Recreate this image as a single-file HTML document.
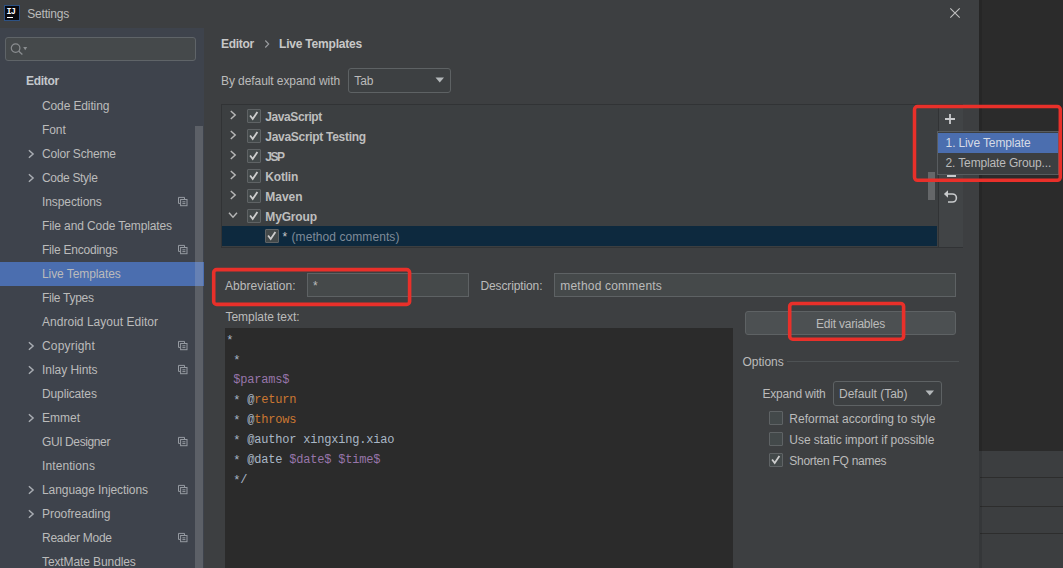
<!DOCTYPE html><html><head><meta charset="utf-8"><title>Settings</title><style>
html,body{margin:0;padding:0}body{width:1063px;height:568px;overflow:hidden;background:#2b2b2b;position:relative;font-family:'Liberation Sans', sans-serif;font-size:12px}
.t{position:absolute;white-space:pre;line-height:16px;height:16px}
.m{position:absolute;white-space:pre;font-family:'Liberation Mono', monospace;font-size:12px;line-height:20px;color:#a9b7c6;letter-spacing:-0.2px}
div,svg{box-sizing:content-box}
</style></head><body>
<div style="position:absolute;left:979px;top:451px;width:84px;height:117px;background:#3c3e40"></div>
<div style="position:absolute;left:980px;top:477px;width:83px;height:1px;background:#2d2d2d"></div>
<div style="position:absolute;left:980px;top:506px;width:83px;height:1px;background:#2d2d2d"></div>
<div style="position:absolute;left:980px;top:533px;width:83px;height:1px;background:#2d2d2d"></div>
<div style="position:absolute;left:0;top:0;width:979px;height:568px;background:#3d3f41"></div>
<div style="position:absolute;left:979px;top:0;width:3px;height:568px;background:rgba(0,0,0,0.1)"></div>
<div style="position:absolute;left:0;top:28px;width:204px;height:540px;background:#3e434c"></div>
<div style="position:absolute;left:4px;top:5px;width:14px;height:14px;background:#08090f;border:1px solid #2d5284"></div>
<div class="t" style="left:6.6px;top:8px;font:bold 8.5px 'Liberation Mono', monospace;line-height:9px;height:9px;color:#fff;letter-spacing:-1px">IJ</div>
<div style="position:absolute;left:7px;top:16.5px;width:6px;height:1.3px;background:#fff"></div>
<svg style="position:absolute;left:949px;top:7px" width="12" height="12" viewBox="0 0 12 12"><path d="M1.3 1.3 L10.7 10.7 M10.7 1.3 L1.3 10.7" stroke="#c0c0c0" stroke-width="1.1"/></svg>
<div style="position:absolute;left:5px;top:37px;width:189px;height:22px;border:1px solid #5f6468;background:#45494b;border-radius:3px"></div>
<svg style="position:absolute;left:9px;top:41px" width="20" height="16" viewBox="0 0 20 16"><circle cx="6.6" cy="7.1" r="4.3" fill="none" stroke="#8a8d90" stroke-width="1.2"/><path d="M9.8 10.3 L13.4 13.4" stroke="#8a8d90" stroke-width="1.3"/><path d="M14.2 6 H18.2 L16.2 9.2 Z" fill="#8a8d90"/></svg>
<div style="position:absolute;left:348px;top:68px;width:101px;height:23px;border:1px solid #5e6264;background:#3d4042;border-radius:3px"></div>
<svg style="position:absolute;left:434px;top:76px" width="12" height="8" viewBox="0 0 12 8"><path d="M1.5 1.5 H10 L5.75 6.5 Z" fill="#b4b8ba"/></svg>
<div style="position:absolute;left:221px;top:104px;width:740px;height:142px;border:1px solid #313335;background:#3c3f41"></div>
<div style="position:absolute;left:222px;top:226px;width:715px;height:20px;background:#0d293e"></div>
<div style="position:absolute;left:938px;top:105px;width:24px;height:142px;background:#414446;border-left:1px solid #313335"></div>
<div style="position:absolute;left:928px;top:172px;width:7px;height:28px;background:rgba(150,153,156,0.45)"></div>
<svg style="position:absolute;left:944px;top:113px" width="12" height="12" viewBox="0 0 12 12"><path d="M6 1 V11 M1 6 H11" stroke="#c9cbcd" stroke-width="1.8"/></svg>
<div style="position:absolute;left:947px;top:175px;width:9px;height:2px;background:#c9cbcd"></div>
<svg style="position:absolute;left:942px;top:189px" width="17" height="16" viewBox="0 0 17 16"><path d="M5 5 H10.4 A4 4 0 0 1 10.4 13 H6" fill="none" stroke="#c9cbcd" stroke-width="1.6"/><path d="M1.9 5 L6 1.3 V8.7 Z" fill="#c9cbcd"/></svg>
<div style="position:absolute;left:265px;top:229px;width:12px;height:12px;border:1px solid #5f6365;background:#43494a;border-radius:1px"></div><svg style="position:absolute;left:265px;top:229px" width="14" height="14" viewBox="0 0 14 14"><path d="M3.1 6.5 L5.7 10 L10.4 3" fill="none" stroke="#cdcdcd" stroke-width="1.8"/></svg>
<div style="position:absolute;left:937px;top:131px;width:120px;height:42px;border:1px solid #585c5f;background:#3c3f41"></div>
<div style="position:absolute;left:938px;top:133px;width:120px;height:20px;background:#4b6eaf"></div>
<div style="position:absolute;left:307px;top:273px;width:160px;height:22px;border:1px solid #5e6264;background:#45494a"></div>
<div style="position:absolute;left:554px;top:273px;width:400px;height:22px;border:1px solid #5e6264;background:#45494a"></div>
<div style="position:absolute;left:225px;top:328px;width:508px;height:240px;background:#2b2b2b"></div>
<div class="m" style="left:226.2px;top:330px"><span style='position:relative;top:1px'>*</span></div>
<div class="m" style="left:226.2px;top:350px"> <span style='position:relative;top:1px'>*</span></div>
<div class="m" style="left:226.2px;top:370px"> <span style='color:#9876aa'>$params$</span></div>
<div class="m" style="left:226.2px;top:390px"> <span style='position:relative;top:1px'>*</span> @<span style='color:#cc7832'>return</span></div>
<div class="m" style="left:226.2px;top:410px"> <span style='position:relative;top:1px'>*</span> @<span style='color:#cc7832'>throws</span></div>
<div class="m" style="left:226.2px;top:430px"> <span style='position:relative;top:1px'>*</span> @author xingxing.xiao</div>
<div class="m" style="left:226.2px;top:450px"> <span style='position:relative;top:1px'>*</span> @date <span style='color:#9876aa'>$date$</span> <span style='color:#9876aa'>$time$</span></div>
<div class="m" style="left:226.2px;top:470px"> <span style='position:relative;top:1px'>*</span>/</div>
<div style="position:absolute;left:745px;top:311px;width:209px;height:22px;border:1px solid #5e6264;background:#4c5052;border-radius:3px"></div>
<div style="position:absolute;left:787px;top:361px;width:172px;height:1px;background:#4e5254"></div>
<div style="position:absolute;left:833px;top:381px;width:107px;height:23px;border:1px solid #5e6264;background:#3d4042;border-radius:3px"></div>
<svg style="position:absolute;left:924px;top:389px" width="12" height="8" viewBox="0 0 12 8"><path d="M1.5 1.5 H10 L5.75 6.5 Z" fill="#b4b8ba"/></svg>
<div style="position:absolute;left:769px;top:411px;width:12px;height:12px;border:1px solid #5f6365;background:#43494a;border-radius:1px"></div>
<div style="position:absolute;left:769px;top:432px;width:12px;height:12px;border:1px solid #5f6365;background:#43494a;border-radius:1px"></div>
<div style="position:absolute;left:769px;top:453px;width:12px;height:12px;border:1px solid #5f6365;background:#43494a;border-radius:1px"></div><svg style="position:absolute;left:769px;top:453px" width="14" height="14" viewBox="0 0 14 14"><path d="M3.1 6.5 L5.7 10 L10.4 3" fill="none" stroke="#cdcdcd" stroke-width="1.8"/></svg>
<svg style="position:absolute;left:25.2px;top:146.8px" width="12" height="14" viewBox="0 0 12 14"><path d="M3.9 3.2 L8.1 7 L3.9 10.8" fill="none" stroke="#a9adb3" stroke-width="1.45"/></svg>
<svg style="position:absolute;left:25.2px;top:170.8px" width="12" height="14" viewBox="0 0 12 14"><path d="M3.9 3.2 L8.1 7 L3.9 10.8" fill="none" stroke="#a9adb3" stroke-width="1.45"/></svg>
<svg style="position:absolute;left:177px;top:196px" width="12" height="12" viewBox="0 0 12 12"><g transform="translate(1,0.9)" fill="none" stroke="#959aa1" stroke-width="1"><path d="M0.5 6.5 V0.5 H6.5 V2.2"/><path d="M0.5 6.5 H2.2"/><rect x="2.6" y="2.6" width="6.4" height="6.2"/><path d="M4.4 4.9 H7.4 M4.4 6.7 H7.4"/></g></svg>
<svg style="position:absolute;left:177px;top:244px" width="12" height="12" viewBox="0 0 12 12"><g transform="translate(1,0.9)" fill="none" stroke="#959aa1" stroke-width="1"><path d="M0.5 6.5 V0.5 H6.5 V2.2"/><path d="M0.5 6.5 H2.2"/><rect x="2.6" y="2.6" width="6.4" height="6.2"/><path d="M4.4 4.9 H7.4 M4.4 6.7 H7.4"/></g></svg>
<div style="position:absolute;left:0;top:262px;width:204px;height:24px;background:#4b6eaf"></div>
<svg style="position:absolute;left:25.2px;top:338.8px" width="12" height="14" viewBox="0 0 12 14"><path d="M3.9 3.2 L8.1 7 L3.9 10.8" fill="none" stroke="#a9adb3" stroke-width="1.45"/></svg>
<svg style="position:absolute;left:177px;top:340px" width="12" height="12" viewBox="0 0 12 12"><g transform="translate(1,0.9)" fill="none" stroke="#959aa1" stroke-width="1"><path d="M0.5 6.5 V0.5 H6.5 V2.2"/><path d="M0.5 6.5 H2.2"/><rect x="2.6" y="2.6" width="6.4" height="6.2"/><path d="M4.4 4.9 H7.4 M4.4 6.7 H7.4"/></g></svg>
<svg style="position:absolute;left:25.2px;top:362.8px" width="12" height="14" viewBox="0 0 12 14"><path d="M3.9 3.2 L8.1 7 L3.9 10.8" fill="none" stroke="#a9adb3" stroke-width="1.45"/></svg>
<svg style="position:absolute;left:177px;top:364px" width="12" height="12" viewBox="0 0 12 12"><g transform="translate(1,0.9)" fill="none" stroke="#959aa1" stroke-width="1"><path d="M0.5 6.5 V0.5 H6.5 V2.2"/><path d="M0.5 6.5 H2.2"/><rect x="2.6" y="2.6" width="6.4" height="6.2"/><path d="M4.4 4.9 H7.4 M4.4 6.7 H7.4"/></g></svg>
<svg style="position:absolute;left:25.2px;top:410.8px" width="12" height="14" viewBox="0 0 12 14"><path d="M3.9 3.2 L8.1 7 L3.9 10.8" fill="none" stroke="#a9adb3" stroke-width="1.45"/></svg>
<svg style="position:absolute;left:177px;top:436px" width="12" height="12" viewBox="0 0 12 12"><g transform="translate(1,0.9)" fill="none" stroke="#959aa1" stroke-width="1"><path d="M0.5 6.5 V0.5 H6.5 V2.2"/><path d="M0.5 6.5 H2.2"/><rect x="2.6" y="2.6" width="6.4" height="6.2"/><path d="M4.4 4.9 H7.4 M4.4 6.7 H7.4"/></g></svg>
<svg style="position:absolute;left:25.2px;top:482.8px" width="12" height="14" viewBox="0 0 12 14"><path d="M3.9 3.2 L8.1 7 L3.9 10.8" fill="none" stroke="#a9adb3" stroke-width="1.45"/></svg>
<svg style="position:absolute;left:177px;top:484px" width="12" height="12" viewBox="0 0 12 12"><g transform="translate(1,0.9)" fill="none" stroke="#959aa1" stroke-width="1"><path d="M0.5 6.5 V0.5 H6.5 V2.2"/><path d="M0.5 6.5 H2.2"/><rect x="2.6" y="2.6" width="6.4" height="6.2"/><path d="M4.4 4.9 H7.4 M4.4 6.7 H7.4"/></g></svg>
<svg style="position:absolute;left:25.2px;top:506.79999999999995px" width="12" height="14" viewBox="0 0 12 14"><path d="M3.9 3.2 L8.1 7 L3.9 10.8" fill="none" stroke="#a9adb3" stroke-width="1.45"/></svg>
<svg style="position:absolute;left:177px;top:532px" width="12" height="12" viewBox="0 0 12 12"><g transform="translate(1,0.9)" fill="none" stroke="#959aa1" stroke-width="1"><path d="M0.5 6.5 V0.5 H6.5 V2.2"/><path d="M0.5 6.5 H2.2"/><rect x="2.6" y="2.6" width="6.4" height="6.2"/><path d="M4.4 4.9 H7.4 M4.4 6.7 H7.4"/></g></svg>
<svg style="position:absolute;left:261.2px;top:36.8px" width="12" height="14" viewBox="0 0 12 14"><path d="M4.3 3.5 L7.7 7 L4.3 10.5" fill="none" stroke="#9a9da0" stroke-width="1.1"/></svg>
<svg style="position:absolute;left:227.1px;top:108.4px" width="12" height="14" viewBox="0 0 12 14"><path d="M3.8 3.0 L8.2 7 L3.8 11.0" fill="none" stroke="#b6b6b6" stroke-width="1.45"/></svg>
<div style="position:absolute;left:247px;top:109px;width:12px;height:12px;border:1px solid #5f6365;background:#43494a;border-radius:1px"></div><svg style="position:absolute;left:247px;top:109px" width="14" height="14" viewBox="0 0 14 14"><path d="M3.1 6.5 L5.7 10 L10.4 3" fill="none" stroke="#cdcdcd" stroke-width="1.8"/></svg>
<svg style="position:absolute;left:227.1px;top:128.4px" width="12" height="14" viewBox="0 0 12 14"><path d="M3.8 3.0 L8.2 7 L3.8 11.0" fill="none" stroke="#b6b6b6" stroke-width="1.45"/></svg>
<div style="position:absolute;left:247px;top:129px;width:12px;height:12px;border:1px solid #5f6365;background:#43494a;border-radius:1px"></div><svg style="position:absolute;left:247px;top:129px" width="14" height="14" viewBox="0 0 14 14"><path d="M3.1 6.5 L5.7 10 L10.4 3" fill="none" stroke="#cdcdcd" stroke-width="1.8"/></svg>
<svg style="position:absolute;left:227.1px;top:148.4px" width="12" height="14" viewBox="0 0 12 14"><path d="M3.8 3.0 L8.2 7 L3.8 11.0" fill="none" stroke="#b6b6b6" stroke-width="1.45"/></svg>
<div style="position:absolute;left:247px;top:149px;width:12px;height:12px;border:1px solid #5f6365;background:#43494a;border-radius:1px"></div><svg style="position:absolute;left:247px;top:149px" width="14" height="14" viewBox="0 0 14 14"><path d="M3.1 6.5 L5.7 10 L10.4 3" fill="none" stroke="#cdcdcd" stroke-width="1.8"/></svg>
<svg style="position:absolute;left:227.1px;top:168.4px" width="12" height="14" viewBox="0 0 12 14"><path d="M3.8 3.0 L8.2 7 L3.8 11.0" fill="none" stroke="#b6b6b6" stroke-width="1.45"/></svg>
<div style="position:absolute;left:247px;top:169px;width:12px;height:12px;border:1px solid #5f6365;background:#43494a;border-radius:1px"></div><svg style="position:absolute;left:247px;top:169px" width="14" height="14" viewBox="0 0 14 14"><path d="M3.1 6.5 L5.7 10 L10.4 3" fill="none" stroke="#cdcdcd" stroke-width="1.8"/></svg>
<svg style="position:absolute;left:227.1px;top:188.4px" width="12" height="14" viewBox="0 0 12 14"><path d="M3.8 3.0 L8.2 7 L3.8 11.0" fill="none" stroke="#b6b6b6" stroke-width="1.45"/></svg>
<div style="position:absolute;left:247px;top:189px;width:12px;height:12px;border:1px solid #5f6365;background:#43494a;border-radius:1px"></div><svg style="position:absolute;left:247px;top:189px" width="14" height="14" viewBox="0 0 14 14"><path d="M3.1 6.5 L5.7 10 L10.4 3" fill="none" stroke="#cdcdcd" stroke-width="1.8"/></svg>
<svg style="position:absolute;left:226.2px;top:208.8px" width="14" height="12" viewBox="0 0 14 12"><path d="M3.0 3.8 L7 8.2 L11.0 3.8" fill="none" stroke="#b6b6b6" stroke-width="1.45"/></svg>
<div style="position:absolute;left:247px;top:209px;width:12px;height:12px;border:1px solid #5f6365;background:#43494a;border-radius:1px"></div><svg style="position:absolute;left:247px;top:209px" width="14" height="14" viewBox="0 0 14 14"><path d="M3.1 6.5 L5.7 10 L10.4 3" fill="none" stroke="#cdcdcd" stroke-width="1.8"/></svg>
<div style="position:absolute;left:195px;top:126px;width:8px;height:442px;background:rgba(200,200,200,0.22)"></div>
<div class="t" id="t0" style="left:26px;top:73px;color:#c4c8cc;font-weight:bold;letter-spacing:-0.320px;">Editor</div>
<div class="t" id="t1" style="left:42px;top:98px;color:#bbbbbb;letter-spacing:-0.122px;">Code Editing</div>
<div class="t" id="t2" style="left:42px;top:122px;color:#bbbbbb;letter-spacing:-0.066px;">Font</div>
<div class="t" id="t3" style="left:42px;top:146px;color:#bbbbbb;letter-spacing:-0.190px;">Color Scheme</div>
<div class="t" id="t4" style="left:42px;top:170px;color:#bbbbbb;letter-spacing:-0.320px;">Code Style</div>
<div class="t" id="t5" style="left:42px;top:194px;color:#bbbbbb;letter-spacing:-0.087px;">Inspections</div>
<div class="t" id="t6" style="left:42px;top:218px;color:#bbbbbb;letter-spacing:-0.110px;">File and Code Templates</div>
<div class="t" id="t7" style="left:42px;top:242px;color:#bbbbbb;letter-spacing:-0.230px;">File Encodings</div>
<div class="t" id="t8" style="left:42px;top:266px;color:#bbbbbb;letter-spacing:-0.077px;">Live Templates</div>
<div class="t" id="t9" style="left:42px;top:290px;color:#bbbbbb;letter-spacing:-0.272px;">File Types</div>
<div class="t" id="t10" style="left:42px;top:314px;color:#bbbbbb;letter-spacing:0.028px;">Android Layout Editor</div>
<div class="t" id="t11" style="left:42px;top:338px;color:#bbbbbb;letter-spacing:0.182px;">Copyright</div>
<div class="t" id="t12" style="left:42px;top:362px;color:#bbbbbb;letter-spacing:-0.048px;">Inlay Hints</div>
<div class="t" id="t13" style="left:42px;top:386px;color:#bbbbbb;letter-spacing:-0.128px;">Duplicates</div>
<div class="t" id="t14" style="left:42px;top:410px;color:#bbbbbb;letter-spacing:-0.003px;">Emmet</div>
<div class="t" id="t15" style="left:42px;top:434px;color:#bbbbbb;letter-spacing:-0.392px;">GUI Designer</div>
<div class="t" id="t16" style="left:42px;top:458px;color:#bbbbbb;letter-spacing:0.095px;">Intentions</div>
<div class="t" id="t17" style="left:42px;top:482px;color:#bbbbbb;letter-spacing:-0.075px;">Language Injections</div>
<div class="t" id="t18" style="left:42px;top:506px;color:#bbbbbb;letter-spacing:-0.018px;">Proofreading</div>
<div class="t" id="t19" style="left:42px;top:530px;color:#bbbbbb;letter-spacing:-0.270px;">Reader Mode</div>
<div class="t" id="t20" style="left:42px;top:554px;color:#bbbbbb;letter-spacing:-0.103px;">TextMate Bundles</div>
<div class="t" id="t21" style="left:27.3px;top:6px;color:#bbbbbb;letter-spacing:-0.207px;">Settings</div>
<div class="t" id="t22" style="left:221px;top:36px;color:#c8c8c8;font-weight:bold;letter-spacing:-0.320px;">Editor</div>
<div class="t" id="t23" style="left:279px;top:36px;color:#c8c8c8;font-weight:bold;letter-spacing:-0.201px;">Live Templates</div>
<div class="t" id="t24" style="left:221px;top:73px;color:#bbbbbb;letter-spacing:-0.080px;">By default expand with</div>
<div class="t" id="t25" style="left:354.2px;top:73px;color:#bbbbbb;">Tab</div>
<div class="t" id="t26" style="left:265.3px;top:109px;color:#bebebe;font-weight:bold;letter-spacing:-0.420px;">JavaScript</div>
<div class="t" id="t27" style="left:265.3px;top:129px;color:#bebebe;font-weight:bold;letter-spacing:-0.296px;">JavaScript Testing</div>
<div class="t" id="t28" style="left:265.3px;top:149px;color:#bebebe;font-weight:bold;letter-spacing:-1.462px;">JSP</div>
<div class="t" id="t29" style="left:265.3px;top:169px;color:#bebebe;font-weight:bold;letter-spacing:-0.200px;">Kotlin</div>
<div class="t" id="t30" style="left:265.3px;top:189px;color:#bebebe;font-weight:bold;letter-spacing:-0.032px;">Maven</div>
<div class="t" id="t31" style="left:265.3px;top:209px;color:#bebebe;font-weight:bold;letter-spacing:-0.167px;">MyGroup</div>
<div class="t" id="t32" style="left:282.5px;top:229px;color:#c8c8c8;">*</div>
<div class="t" id="t33" style="left:291.5px;top:229px;color:#7f8b99;letter-spacing:0.076px;">(method comments)</div>
<div class="t" id="t34" style="left:225px;top:278px;color:#bbbbbb;letter-spacing:0.035px;">Abbreviation:</div>
<div class="t" id="t35" style="left:313px;top:278px;color:#bbbbbb;">*</div>
<div class="t" id="t36" style="left:480.4px;top:278px;color:#bbbbbb;letter-spacing:-0.113px;">Description:</div>
<div class="t" id="t37" style="left:560.3px;top:278px;color:#bbbbbb;letter-spacing:0.199px;">method comments</div>
<div class="t" id="t38" style="left:225.5px;top:309px;color:#bbbbbb;letter-spacing:-0.050px;">Template text:</div>
<div class="t" id="t39" style="left:816px;top:316px;color:#bbbbbb;letter-spacing:-0.218px;">Edit variables</div>
<div class="t" id="t40" style="left:742.5px;top:354px;color:#bbbbbb;letter-spacing:-0.016px;">Options</div>
<div class="t" id="t41" style="left:762.5px;top:386px;color:#bbbbbb;letter-spacing:-0.216px;">Expand with</div>
<div class="t" id="t42" style="left:839px;top:386px;color:#bbbbbb;letter-spacing:-0.016px;">Default (Tab)</div>
<div class="t" id="t43" style="left:789.3px;top:411px;color:#bbbbbb;letter-spacing:-0.002px;">Reformat according to style</div>
<div class="t" id="t44" style="left:789.3px;top:432px;color:#bbbbbb;letter-spacing:-0.037px;">Use static import if possible</div>
<div class="t" id="t45" style="left:789.3px;top:453px;color:#bbbbbb;letter-spacing:-0.274px;">Shorten FQ names</div>
<div class="t" id="t46" style="left:945.6px;top:135px;color:#d6dbe6;letter-spacing:-0.136px;">1. Live Template</div>
<div class="t" id="t47" style="left:945.6px;top:155px;color:#bbbbbb;letter-spacing:-0.151px;">2. Template Group...</div>
<svg style="position:absolute;left:0;top:0;pointer-events:none" width="1063" height="568" viewBox="0 0 1063 568"><rect x="914.5" y="106.5" width="145.8" height="73.8" rx="3" fill="none" stroke="#e9302a" stroke-width="3.5"/><rect x="213.7" y="269.6" width="195.9" height="34.8" rx="3" fill="none" stroke="#e9302a" stroke-width="3.6"/><rect x="789.7" y="303.5" width="113.9" height="35.7" rx="3" fill="none" stroke="#e9302a" stroke-width="3.6"/></svg>
</body></html>
